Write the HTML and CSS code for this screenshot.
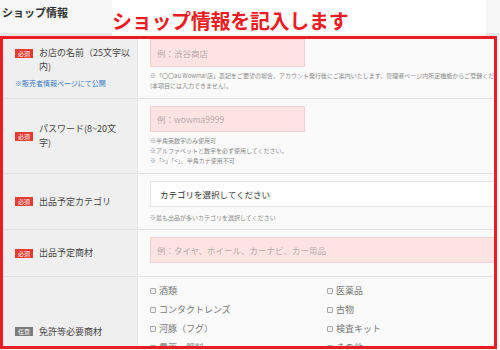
FILE: index.html
```html
<!DOCTYPE html>
<html>
<head>
	<meta charset="utf-8">
	<title>ショップ情報</title>
<link rel="stylesheet" href="styles.css">
</head>
<body>
<div class="head">
	<h1 class="head-title">ショップ情報</h1>
	<p class="head-note">ショップ情報を記入します</p>
	<div class="head-rest"></div>
</div>
<!-- 入力フォーム -->
<div class="frame">
	<div class="row row-name">
		<div class="label label-top">
			<div class="label-line">
				<span class="badge">必須</span>
				<span class="label-text">お店の名前（25文字以<br>内)</span>
			</div>
			<p class="label-link">※販売者情報ページにて公開</p>
		</div>
		<div class="value value-top">
			<div class="input">例：渋谷商店</div>
			<p class="note nowrap">※「〇〇au Wowma!店」表記をご要望の場合、アカウント発行後にご案内いたします、管理者ページ内所定機能からご登録ください。</p>
			<p class="note nowrap">(本項目には入力できません)。</p>
		</div>
	</div>
	<div class="row row-pass">
		<div class="label">
			<span class="badge">必須</span>
			<span class="label-text">パスワード(8~20文<br>字)</span>
		</div>
		<div class="value">
			<div class="input">例：wowma9999</div>
			<p class="note">※半角英数字のみ使用可</p>
			<p class="note">※アルファベットと数字を必ず使用してください。</p>
			<p class="note">※「&gt;」「&lt;」、半角カナ使用不可</p>
		</div>
	</div>
	<div class="row row-cat">
		<div class="label">
			<span class="badge">必須</span>
			<span class="label-text">出品予定カテゴリ</span>
		</div>
		<div class="value">
			<div class="select">カテゴリを選択してください</div>
			<p class="note">※最も出品が多いカテゴリを選択してください</p>
		</div>
	</div>
	<div class="row row-item">
		<div class="label">
			<span class="badge">必須</span>
			<span class="label-text">出品予定商材</span>
		</div>
		<div class="value">
			<div class="input input-wide">例：タイヤ、ホイール、カーナビ、カー用品</div>
		</div>
	</div>
	<div class="row row-license">
		<div class="label">
			<span class="badge badge-gray">任意</span>
			<span class="label-text">免許等必要商材</span>
		</div>
		<div class="value value-top">
			<ul class="checks">
				<li><i class="box"></i>酒類</li>
				<li><i class="box"></i>医薬品</li>
				<li><i class="box"></i>コンタクトレンズ</li>
				<li><i class="box"></i>古物</li>
				<li><i class="box"></i>河豚（フグ）</li>
				<li><i class="box"></i>検査キット</li>
				<li><i class="box"></i>農薬・肥料</li>
				<li><i class="box"></i>その他</li>
			</ul>
		</div>
	</div>
</div>
</body>
</html>
```

FILE: styles.css
```css
*{margin: 0;padding: 0;box-sizing: border-box;}
ul{list-style: none;}
body{
	width: 500px;
	height: 350px;
	overflow: hidden;
	background: #f7f7f7;
	font-family: "Noto Sans CJK JP", "Noto Sans", sans-serif;
	color: #444;
}

/* 見出し */
.head{display: flex;height: 36px;}
.head-title{
	width: 112px;
	padding: 4px 0 0 2px;
	font-size: 11px;
	font-weight: bold;
	color: #333;
	border-bottom: 3px solid #e6e6e6;
}
.head-note{
	width: 374px;
	background: #fff;
	padding: 9px 0 0 0;
	font-size: 20px;
	line-height: 24px;
	font-weight: bold;
	color: #ec1c24;
	letter-spacing: -0.3px;
}
.head-rest{flex: 1;border-bottom: 3px solid #e6e6e6;}

/* 赤枠 */
.frame{
	width: 497px;
	height: 313px;
	border: 3px solid #ec1c24;
	overflow: hidden;
	background: #fafafa;
}
.row{
	display: grid;
	grid-template-columns: 135px 1fr;
	border-bottom: 1px solid #e3e3e3;
}
.row-name{height: 60px;}
.row-pass{height: 75px;}
.row-cat{height: 56px;}
.row-item{height: 47px;}
.row-license{height: 110px;}

.label{
	display: flex;
	align-items: center;
	gap: 6px;
	padding-left: 12px;
	background: #efefef;
	border-right: 1px solid #e3e3e3;
	font-size: 9px;
	line-height: 14px;
	color: #444;
}
.label-top{display: block;padding-top: 7px;}
.label-line{display: flex;align-items: flex-start;gap: 6px;}
.label-line .badge{margin-top: 3px;}
.label-link{margin-top: 2px;font-size: 7px;color: #3d7cc9;}
.badge{
	flex: none;
	width: 18px;
	height: 9px;
	background: #e53b30;
	color: #fff;
	font-size: 6px;
	line-height: 9px;
	text-align: center;
}
.badge-gray{background: #7c7c7c;}

.value{
	padding: 7px 0 0 12px;
	min-width: 0;
}
.value-top{padding-top: 0;}
.input{
	width: 155px;
	height: 28px;
	padding-left: 6px;
	background: #fde4e3;
	border: 1px solid #f3d3d2;
	font-size: 8.5px;
	line-height: 26px;
	color: #b9a9a9;
}
.row-pass .input{height: 26px;line-height: 24px;}
.input-wide{width: 400px;height: 26px;line-height: 24px;}
.select{
	width: 400px;
	height: 26px;
	padding-left: 9px;
	background: #fff;
	border: 1px solid #e6e6e6;
	font-size: 8.5px;
	line-height: 24px;
	color: #333;
}
.note{font-size: 6px;line-height: 10px;color: #8a8a8a;}
.row-name .note:first-of-type{margin-top: 4px;}
.row-pass .note:first-of-type{margin-top: 4px;}
.row-cat .note{margin-top: 6px;}
.nowrap{white-space: nowrap;}

/* チェックボックス */
.checks{
	display: grid;
	grid-template-columns: 177px 177px;
	padding-top: 6px;
	row-gap: 4px;
}
.checks li{
	display: flex;
	align-items: center;
	gap: 3px;
	height: 15px;
	font-size: 9px;
	color: #777;
}
.box{
	width: 6px;
	height: 6px;
	border: 1px solid #aaa;
	border-radius: 1px;
	background: #f2f2f2;
}
```
